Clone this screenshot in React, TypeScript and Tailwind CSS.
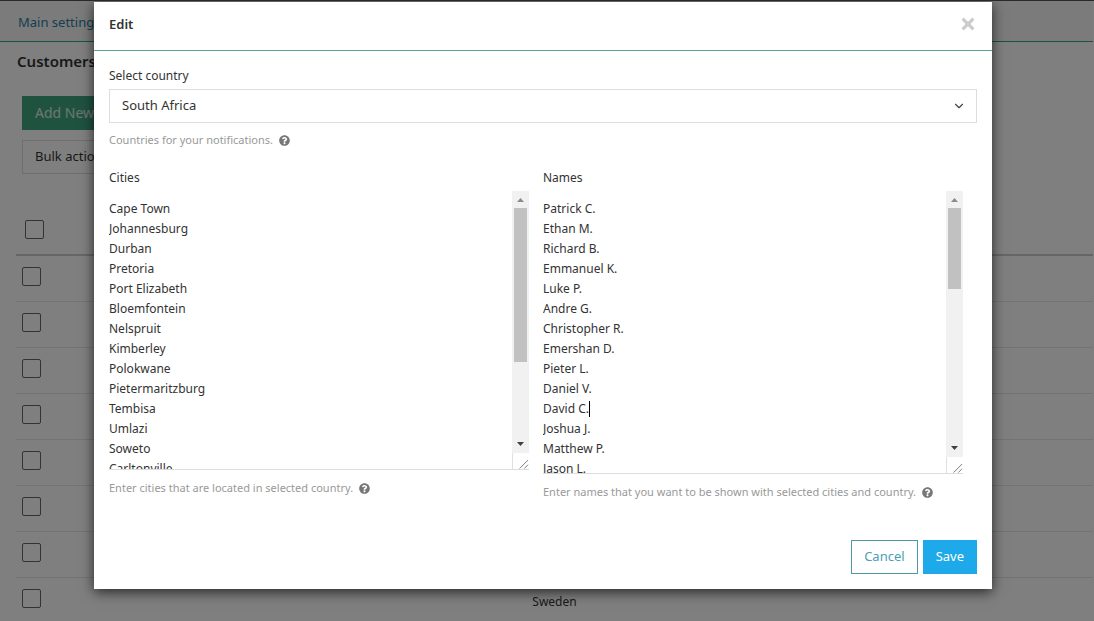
import { useState } from "react";
import { FaQuestionCircle, FaTimes } from "react-icons/fa";
import { FiChevronDown } from "react-icons/fi";

const cityList = [
  "Cape Town",
  "Johannesburg",
  "Durban",
  "Pretoria",
  "Port Elizabeth",
  "Bloemfontein",
  "Nelspruit",
  "Kimberley",
  "Polokwane",
  "Pietermaritzburg",
  "Tembisa",
  "Umlazi",
  "Soweto",
  "Carltonville",
];

const nameList = [
  "Patrick C.",
  "Ethan M.",
  "Richard B.",
  "Emmanuel K.",
  "Luke P.",
  "Andre G.",
  "Christopher R.",
  "Emershan D.",
  "Pieter L.",
  "Daniel V.",
  "David C.",
  "Joshua J.",
  "Matthew P.",
  "Jason L.",
];

const rows = ["", "", "", "", "", "", "", "Sweden"];

const checkboxClass =
  "block h-[19px] w-[19px] appearance-none rounded-xs border border-[#666] bg-white";

const Hint = (props: { id: string; text: string }) => {
  return (
    <p
      id={props.id}
      className="flex items-center gap-[6px] text-[11px] leading-5 text-[#999]"
    >
      {props.text}
      <FaQuestionCircle className="h-[11px] w-[11px] text-[#777]" />
    </p>
  );
};

const Scrollbar = (props: { thumb: string }) => {
  return (
    <div className="flex w-[17px] shrink-0 flex-col" aria-hidden="true">
      <div className="flex flex-1 flex-col items-center bg-[#f1f1f1]">
        <svg viewBox="0 0 17 17" className="h-[17px] w-[17px] shrink-0">
          <path d="M5 11l3.5-4L12 11z" fill="#8b8b8b" />
        </svg>
        <div className={`w-[13px] bg-[#c1c1c1] ${props.thumb}`} />
        <svg viewBox="0 0 17 17" className="mt-auto h-[17px] w-[17px] shrink-0">
          <path d="M5 6l3.5 4L12 6z" fill="#404040" />
        </svg>
      </div>
      <svg
        viewBox="0 0 17 16"
        className="h-4 w-[17px] border-l border-[#e0e0e0]"
      >
        <path
          d="M7 16l9-9M12 16l4-4"
          stroke="#777"
          strokeWidth="1"
          fill="none"
        />
      </svg>
    </div>
  );
};

const ListField = (props: {
  id: string;
  label: string;
  hint: string;
  items: string[];
  height: string;
  thumb: string;
  caretLine?: number;
}) => {
  const [value, setValue] = useState(props.items.join("\n"));
  return (
    <div className="flex-1 pr-[14px]">
      <label htmlFor={props.id} className="block text-xs leading-5">
        {props.label}
      </label>
      <div
        className={`relative mt-[3px] flex border-b border-[#ddd] ${props.height}`}
      >
        <textarea
          id={props.id}
          aria-describedby={`${props.id}-hint`}
          className="min-w-0 flex-1 resize-none overflow-hidden pt-2 text-xs leading-5 outline-none"
          value={value}
          onChange={(e) => setValue(e.target.value)}
        />
        {props.caretLine !== undefined && (
          <div
            className="pointer-events-none absolute left-0 flex h-5 items-center text-xs"
            style={{ top: 8 + props.caretLine * 20 }}
            aria-hidden="true"
          >
            <span className="invisible">{props.items[props.caretLine]}</span>
            <span className="h-4 w-px bg-black" />
          </div>
        )}
        <Scrollbar thumb={props.thumb} />
      </div>
      <div className="pt-2">
        <Hint id={`${props.id}-hint`} text={props.hint} />
      </div>
    </div>
  );
};

const CustomersPage = () => {
  return (
    <div className="pr-px">
      <nav className="border-b border-[#2ea88a] bg-[#f6f6f6] px-[18px] pt-[11px] pb-[9px] text-[13px] leading-5">
        <a href="#main" className="text-[#2d7ea0]">
          Main settings
        </a>
      </nav>
      <main className="pt-[7px] pl-4">
        <h1 className="pl-px text-[15px] leading-6 font-semibold">Customers</h1>
        <div className="flex flex-col items-start gap-[10px] pt-[23px] pl-[6px]">
          <button className="h-[34px] bg-[#40a580] px-[13px] text-sm text-white/80">
            Add New
          </button>
          <button className="h-[34px] border border-[#ddd] bg-white px-3 text-[13px]">
            Bulk actions
          </button>
        </div>
        <table className="mt-[30px] w-full table-fixed text-xs">
          <thead>
            <tr className="h-[51px] border-b-2 border-[#ccc]">
              <th className="w-[90px] pl-[9px]">
                <input
                  type="checkbox"
                  aria-label="Select all customers"
                  className={checkboxClass}
                />
              </th>
              <th />
              <th className="w-[90px]" />
            </tr>
          </thead>
          <tbody>
            {rows.map((country, i) => (
              <tr key={i} className="h-[46px] border-b border-[#e6e6e6]">
                <td className="pb-1 pl-[6px]">
                  <input
                    type="checkbox"
                    aria-label={`Select row ${i + 1}`}
                    className={checkboxClass}
                  />
                </td>
                <td className="pt-1 text-center">{country}</td>
                <td />
              </tr>
            ))}
          </tbody>
        </table>
      </main>
    </div>
  );
};

const EditModal = () => {
  return (
    <div
      role="dialog"
      aria-labelledby="edit-title"
      className="w-full max-w-[898px] bg-white shadow-[0_3px_12px_rgba(0,0,0,0.7)]"
    >
      <div className="flex items-center justify-between border-b border-[#5f9f94] px-[15px] pt-[10px] pb-[14px]">
        <h2 id="edit-title" className="text-[13px] leading-6 font-semibold">
          Edit
        </h2>
        <button aria-label="Close">
          <FaTimes className="h-[18px] w-[18px] text-[#ccc]" />
        </button>
      </div>
      <form className="p-[15px]">
        <label htmlFor="country" className="block text-xs leading-5">
          Select country
        </label>
        <div className="relative mt-[3px]">
          <select
            id="country"
            aria-describedby="country-hint"
            className="block h-[34px] w-full appearance-none border border-[#ddd] bg-white px-3 text-[13px]"
          >
            <option>South Africa</option>
          </select>
          <FiChevronDown className="pointer-events-none absolute top-[10px] right-[11px] h-[14px] w-[14px] text-[#444]" />
        </div>
        <div className="pt-[7px]">
          <Hint id="country-hint" text="Countries for your notifications." />
        </div>
        <div className="flex pt-[18px]">
          <ListField
            id="cities"
            label="Cities"
            hint="Enter cities that are located in selected country."
            items={cityList}
            height="h-[279px]"
            thumb="h-[154px]"
          />
          <ListField
            id="names"
            label="Names"
            hint="Enter names that you want to be shown with selected cities and country."
            items={nameList}
            height="h-[283px]"
            thumb="h-[81px]"
            caretLine={10}
          />
        </div>
        <div className="flex justify-end gap-[5px] pt-[38px]">
          <button
            type="button"
            className="h-[34px] border border-[#4a9aa8] px-3 text-[13px] text-[#4a9fb5]"
          >
            Cancel
          </button>
          <button
            type="button"
            className="h-[34px] bg-[#1eaaea] px-[13px] text-[13px] text-white"
          >
            Save
          </button>
        </div>
      </form>
    </div>
  );
};

const App = () => {
  return (
    <div className="relative h-screen overflow-hidden border-t border-[#2a282a] bg-white font-['Noto_Sans','Open_Sans',sans-serif] text-[#333]">
      <CustomersPage />
      <div className="absolute inset-0 flex items-start justify-center bg-black/50 pt-px pr-2">
        <EditModal />
      </div>
    </div>
  );
};

export default App;
